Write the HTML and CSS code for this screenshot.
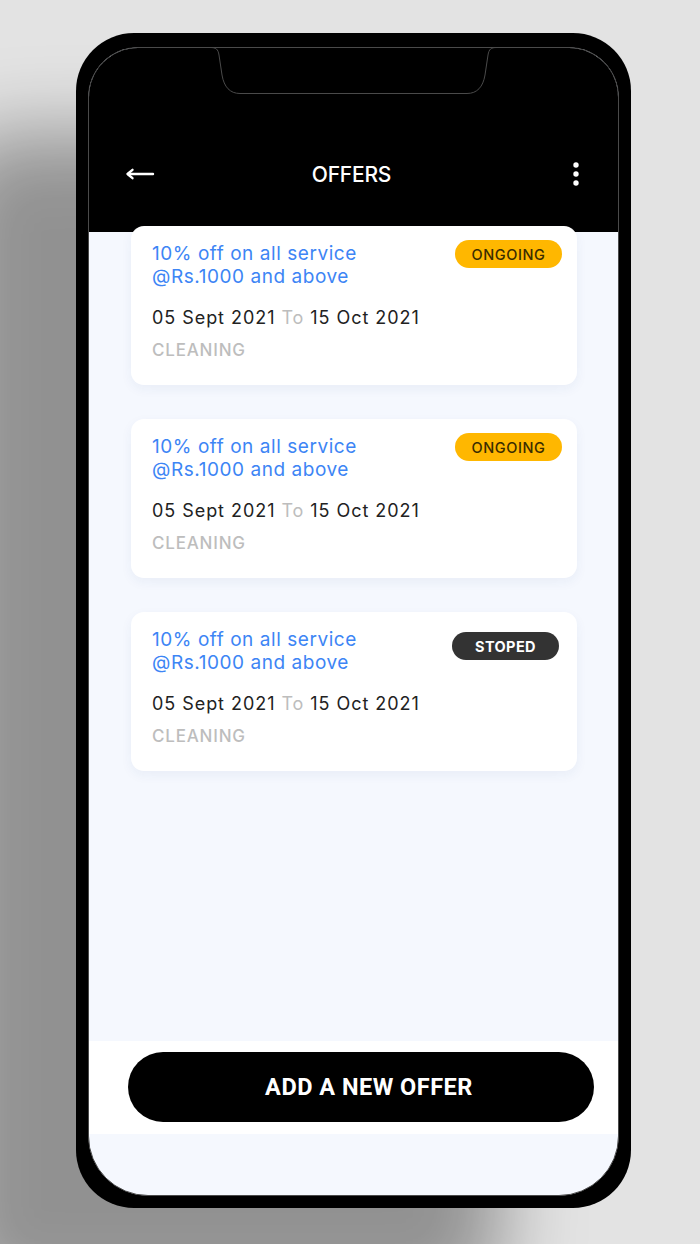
FILE: index.html
```html
<!DOCTYPE html>
<html lang="en">
<head>
<meta charset="utf-8">
<title>Offers</title>
<link rel="stylesheet" href="styles.css">
</head>
<body>
<div class="stage">
  <div class="phone">
    <div class="screen">
      <svg class="notch" width="287" height="48" viewBox="0 0 287 48" aria-hidden="true">
        <path d="M0,0 H287 V1 C281,1 279,2 278,8 L275,28 C273,40 267,46.5 257,46.5 L30,46.5 C20,46.5 14,40 12,28 L9,8 C8,2 6,1 0,1 Z" fill="#000"/>
        <path d="M0,0.5 C6,0.5 8,2 9,8 L12,28 C14,40 20,46.5 30,46.5 L257,46.5 C267,46.5 273,40 275,28 L278,8 C279,2 281,0.5 287,0.5" fill="none" stroke="#4a4a4a" stroke-width="1"/>
      </svg>
      <header class="topbar">
        <div class="topbar-row">
          <span class="icon-btn back">
            <svg width="30" height="14" viewBox="0 0 30 14" aria-hidden="true">
              <path d="M28 7 H4" stroke="#fff" stroke-width="2.4" stroke-linecap="round"/>
              <path d="M7.5 2.8 L2.5 7 L7.5 11.2" fill="none" stroke="#fff" stroke-width="2.4" stroke-linecap="round" stroke-linejoin="round"/>
            </svg>
          </span>
          <h1 class="title">OFFERS</h1>
          <span class="icon-btn more">
            <svg width="8" height="26" viewBox="0 0 8 26" aria-hidden="true">
              <circle cx="4" cy="4" r="2.7" fill="#fff"/>
              <circle cx="4" cy="13" r="2.7" fill="#fff"/>
              <circle cx="4" cy="22" r="2.7" fill="#fff"/>
            </svg>
          </span>
        </div>
      </header>

      <main class="list">
        <article class="card">
          <div class="card-top">
            <h2 class="offer">10% off on all service<br>@Rs.1000 and above</h2>
            <span class="badge badge-ongoing">ONGOING</span>
          </div>
          <p class="dates">05 Sept 2021 <span class="to">To</span> 15 Oct 2021</p>
          <p class="category">CLEANING</p>
        </article>
        <article class="card">
          <div class="card-top">
            <h2 class="offer">10% off on all service<br>@Rs.1000 and above</h2>
            <span class="badge badge-ongoing">ONGOING</span>
          </div>
          <p class="dates">05 Sept 2021 <span class="to">To</span> 15 Oct 2021</p>
          <p class="category">CLEANING</p>
        </article>
        <article class="card">
          <div class="card-top">
            <h2 class="offer">10% off on all service<br>@Rs.1000 and above</h2>
            <span class="badge badge-stopped">STOPED</span>
          </div>
          <p class="dates">05 Sept 2021 <span class="to">To</span> 15 Oct 2021</p>
          <p class="category">CLEANING</p>
        </article>
      </main>

      <footer class="action">
        <button class="add-btn" type="button">ADD A NEW OFFER</button>
      </footer>
    </div>
  </div>
</div>
</body>
</html>
```

FILE: styles.css
```css
* { box-sizing: border-box; }

html, body {
  margin: 0;
  padding: 0;
}

body {
  width: 700px;
  height: 1244px;
  overflow: hidden;
  background: #e3e3e3;
  font-family: Inter, "Open Sans", sans-serif;
}

.stage {
  width: 700px;
  height: 1244px;
  padding: 33px 0 0 76px;
}

.phone {
  width: 555px;
  height: 1175px;
  padding: 14px 12px 12px 12px;
  background: #000;
  border-radius: 58px;
  box-shadow: -130px 100px 80px 0 rgba(0, 0, 0, 0.36);
}

.screen {
  position: relative;
  width: 100%;
  height: 100%;
  border: 1px solid #4a4a4a;
  border-radius: 50px 50px 60px 60px;
  background: #f5f8fe;
  overflow: hidden;
  display: flex;
  flex-direction: column;
}

.notch {
  position: absolute;
  top: -1px;
  left: 121px;
  display: block;
}

.topbar {
  flex: 0 0 184px;
  background: #000;
  padding: 110px 38px 0 36px;
}

.topbar-row {
  display: flex;
  align-items: center;
  justify-content: space-between;
  height: 32px;
}

.icon-btn {
  width: 30px;
  display: flex;
  align-items: center;
}

.back { justify-content: flex-start; }
.more { justify-content: flex-end; }

.title {
  margin: 0;
  color: #fff;
  font-family: Inter, sans-serif;
  font-size: 21px;
  font-weight: 500;
  letter-spacing: -0.2px;
  padding-right: 2px;
}

.list {
  flex: 1 1 auto;
  margin-top: -6px;
  padding: 0 41px 0 42px;
  display: flex;
  flex-direction: column;
  gap: 34px;
  position: relative;
}

.card {
  height: 159px;
  background: #fff;
  border-radius: 13px;
  box-shadow: 0 4px 12px rgba(40, 70, 140, 0.06);
  padding: 16px 15px 0 21px;
}

.card-top {
  display: flex;
  justify-content: space-between;
  align-items: flex-start;
}

.offer {
  margin: 0;
  color: #3d85f5;
  font-size: 19px;
  font-weight: 400;
  line-height: 23px;
  letter-spacing: 0.55px;
}

.badge {
  flex: 0 0 auto;
  width: 107px;
  height: 28px;
  border-radius: 14px;
  display: flex;
  align-items: center;
  justify-content: center;
  font-size: 14.5px;
  letter-spacing: 0.6px;
  margin-top: -2px;
}

.badge-ongoing {
  background: #ffb700;
  color: #3a2c00;
  font-weight: 500;
}

.badge-stopped {
  background: #333333;
  color: #fff;
  font-weight: 700;
  letter-spacing: 0.4px;
  margin-right: 3px;
  margin-top: 4px;
}

.dates {
  margin: 18px 0 0;
  color: #222;
  font-size: 18px;
  line-height: 24px;
  letter-spacing: 0.95px;
}

.to { color: #bdbdbd; }

.category {
  margin: 9px 0 0;
  color: #bdbdbd;
  font-size: 17px;
  font-weight: 500;
  line-height: 22px;
  letter-spacing: 0.8px;
}

.action {
  flex: 0 0 93px;
  margin-bottom: 61px;
  background: #fff;
  padding: 11px 24px 12px 39px;
}

.add-btn {
  width: 100%;
  height: 70px;
  border: none;
  border-radius: 35px;
  background: #000;
  color: #fff;
  font-family: Roboto, sans-serif;
  font-size: 23.5px;
  font-weight: 700;
  letter-spacing: 0.5px;
  padding: 0 0 0 16px;
  cursor: pointer;
}
```
